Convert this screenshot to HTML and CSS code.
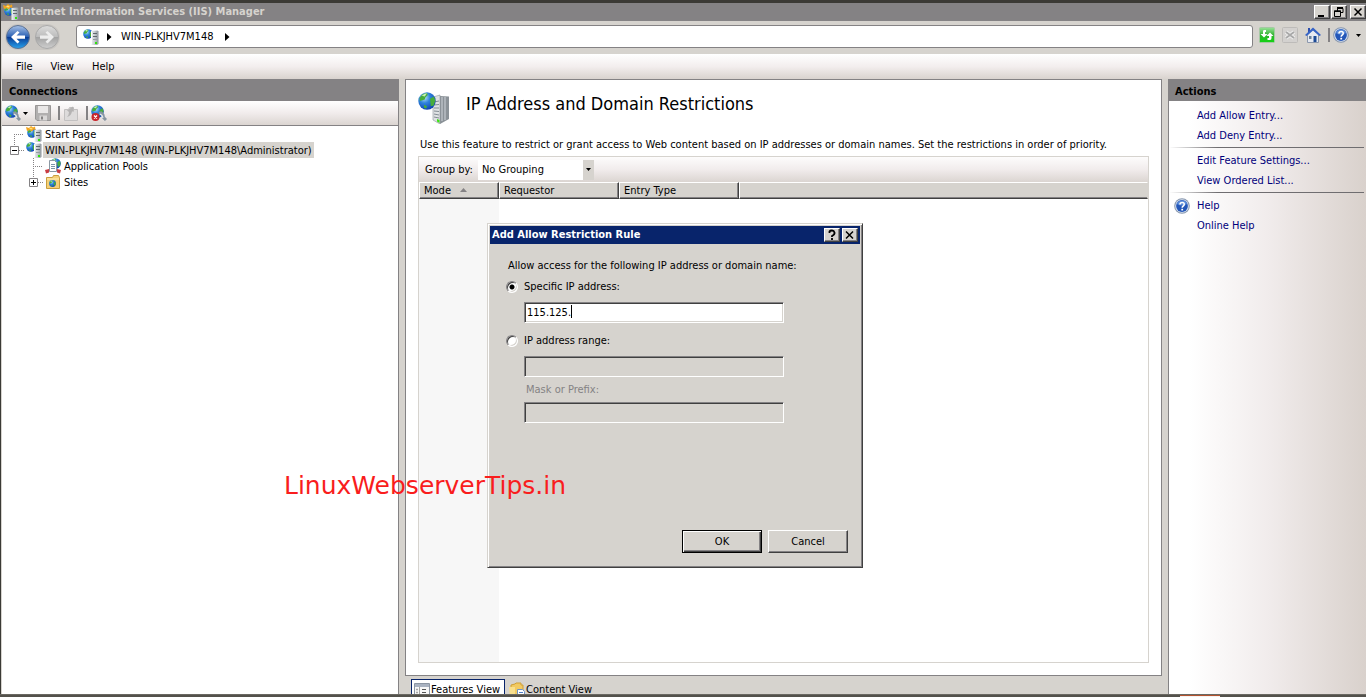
FILE: index.html
```html
<!DOCTYPE html>
<html lang="en">
<head>
<meta charset="utf-8">
<title>Internet Information Services (IIS) Manager</title>
<link rel="stylesheet" href="styles.css">
</head>
<body>
<svg class="defs" aria-hidden="true">
  <defs>
    <radialGradient id="sea" cx=".35" cy=".3" r=".8"><stop offset="0" stop-color="#b9e4fb"/><stop offset=".4" stop-color="#2f84dc"/><stop offset="1" stop-color="#0a3aac"/></radialGradient>
    <linearGradient id="steel" x2="1"><stop offset="0" stop-color="#f2f4f5"/><stop offset=".5" stop-color="#c4cace"/><stop offset="1" stop-color="#8d959b"/></linearGradient>
    <linearGradient id="blueball" x2="0" y2="1"><stop offset="0" stop-color="#a9c2e6"/><stop offset=".48" stop-color="#2c62b4"/><stop offset=".52" stop-color="#0a3d96"/><stop offset="1" stop-color="#27a3ee"/></linearGradient>
    <linearGradient id="greyball" x2="0" y2="1"><stop offset="0" stop-color="#dcdcdc"/><stop offset=".48" stop-color="#bdbdbd"/><stop offset=".52" stop-color="#a3a3a3"/><stop offset="1" stop-color="#cfcfcf"/></linearGradient>
    <linearGradient id="leaf" x2="0" y2="1"><stop offset="0" stop-color="#9be39a"/><stop offset=".5" stop-color="#2fb32f"/><stop offset="1" stop-color="#12d412"/></linearGradient>
  </defs>
  <symbol id="globe" viewBox="0 0 12 12">
    <circle cx="6" cy="6" r="5.800" fill="url(#sea)"/>
    <path d="M1 4 3 1.500 6 .6 6.500 2 5 3.500 4.500 5 3 5.500 1.200 6zM8 4.500 10.500 3 11.600 5.500 10.500 9 8.500 9.500 8.200 6.500zM4 8.500 6 9.500 5.500 11 4 10.500z" fill="#47ad3b"/>
    <path d="M2.500 2.500Q4 1 6 .9L4.500 3z" fill="#c7f0b0"/>
  </symbol>
  <symbol id="server" viewBox="0 0 16 16">
    <use href="#globe" x="0" y="0" width="10" height="10"/>
    <path d="M8 2 14.500 1.500 15.500 2.500V15L14 16H8z" fill="url(#steel)"/>
    <path d="M8.500 2.500V15.500" stroke="#fff"/>
    <path d="M10 4.500H14M10 7.500H14" stroke="#5f686f"/>
    <path d="M10 10.500H14" stroke="#949ca2"/>
    <path d="M12 13h2v2h-2z" fill="#30e40c"/>
  </symbol>
  <symbol id="start" viewBox="0 0 16 16">
    <use href="#globe" x="1" y="2" width="10" height="10"/>
    <path d="M8.500 4 14.500 3.500 15.500 4.500V15L14 16H8.500z" fill="url(#steel)"/>
    <path d="M10 6.500H14M10 9.500H14" stroke="#5f686f"/>
    <path d="M12 13h2v2h-2z" fill="#30e40c"/>
    <path d="M0 1 3 2 5 0 7 1.500 9 .5 9.500 4 7.500 3.500 6 5.500 4 4 1 5z" fill="#f4a31c"/>
    <path d="M3 2.500 5 1.500 7 3 5 3.500z" fill="#ffe27a"/>
  </symbol>
  <symbol id="connect" viewBox="0 0 16 16">
    <use href="#globe" x="0" y="0" width="13" height="13"/>
    <path d="M8 8.500 10 8 12 10 12.500 12.500 15 15" fill="none" stroke="#8795a1" stroke-width="3"/>
    <path d="M9 9 11 10.500 12 13" fill="none" stroke="#e4ebef" stroke-width="1.200"/>
  </symbol>
  <symbol id="help" viewBox="0 0 16 16">
    <circle cx="8" cy="8" r="7.800" fill="#8796ad"/><circle cx="8" cy="8" r="6.800" fill="#d9e4f3"/>
    <circle cx="8" cy="8" r="5.900" fill="#2457b8"/>
    <path d="M3 6A5.300 5.300 0 0 1 13 6Q8 9 3 6z" fill="#5d8edb"/>
    <path d="M6 6.500Q6 4.500 8.200 4.500T10.200 6.500Q10.200 7.500 9 8.200 8.200 8.700 8.200 9.800" fill="none" stroke="#fff" stroke-width="1.600"/>
    <path d="M7.300 10.800h1.800v1.700H7.300z" fill="#fff"/>
  </symbol>
</svg>

<div class="window">
  <header class="titlebar">
    <svg class="icon"><use href="#start"/></svg>
    <h1 class="title">Internet Information Services (IIS) Manager</h1>
    <div class="caption-buttons">
      <button class="cap" aria-label="Minimize"><svg viewBox="0 0 12 12"><path d="M2 9h6v2H2z"/></svg></button>
      <button class="cap" aria-label="Restore"><svg viewBox="0 0 12 12"><path d="M4 2.500h6v4H8M4.500 5V2M10 1.500H4M1.500 5v5.500h6V5z" fill="none" stroke="#000"/><path d="M1 4.500h7v1.500H1z"/></svg></button>
      <button class="cap cap-close" aria-label="Close"><svg viewBox="0 0 12 12"><path d="M2.500 2.500 9.500 9.500M9.500 2.500 2.500 9.500" stroke="#000" stroke-width="1.500"/></svg></button>
    </div>
  </header>

  <nav class="navbar">
    <div class="travel">
      <button class="ball" aria-label="Back"><svg viewBox="0 0 24 24"><circle cx="12" cy="12" r="11.500" fill="url(#blueball)" stroke="#5d7292"/><path d="M5 12 11.500 6 13.500 7.500 10.500 10.500H19V13.800H10.500L13.500 16.800 11.500 18.500z" fill="#fff"/></svg></button>
      <button class="ball" aria-label="Forward"><svg viewBox="0 0 24 24"><circle cx="12" cy="12" r="11.500" fill="url(#greyball)" stroke="#a9a9a9"/><path d="M19 12 12.500 6 10.500 7.500 13.500 10.500H5V13.800H13.500L10.500 16.800 12.500 18.500z" fill="#ededed"/></svg></button>
    </div>
    <div class="address">
      <svg class="icon"><use href="#server"/></svg>
      <svg class="arrow" viewBox="0 0 5 8"><path d="M0 0 4.500 4 0 8z"/></svg>
      <span>WIN-PLKJHV7M148</span>
      <svg class="arrow arrow-last" viewBox="0 0 5 8"><path d="M0 0 4.500 4 0 8z"/></svg>
    </div>
    <div class="nav-tools">
      <button class="tool" aria-label="Refresh"><svg viewBox="0 0 16 16"><rect x=".5" y=".5" width="15" height="15" rx="1" fill="url(#leaf)" stroke="#a6c8a4"/><path d="M7 3H5Q4 3 4 4.500V7H1.500L5 10.500 8.500 7H6V5H7zM8.500 13H11Q12.500 13 12.500 11V9H14.500L11 5.500 7.500 9H10V11H8.500z" fill="#fff"/></svg></button>
      <button class="tool" aria-label="Stop"><svg viewBox="0 0 16 16"><rect x=".5" y=".5" width="15" height="15" rx="1" fill="#d3d1cf" stroke="#bdbbb9"/><path d="M4 5 12 11M12 5 4 11" stroke="#f0f0f0" stroke-width="3.500"/><path d="M4 5 12 11M12 5 4 11" stroke="#a8a8a8" stroke-width="1.800"/></svg></button>
      <button class="tool" aria-label="Home"><svg viewBox="0 0 16 16"><path d="M2.500 8 8 2.500 13.500 8V15.500H2.500z" fill="#e6eaf2" stroke="#8c98ad"/><path d="M3 1h2v5H3z" fill="#2d4fae"/><path d="M0 8 8 .5 16 8 14.500 9 8 3.500 1.500 9z" fill="#3563c7"/><path d="M8.500 9h3v6h-3z" fill="#1d4b96"/><path d="M4 9h2.500v3H4z" fill="#69809c"/></svg></button>
      <span class="bar"></span>
      <button class="tool" aria-label="Help"><svg><use href="#help"/></svg></button>
      <svg class="drop" viewBox="0 0 5 3"><path d="M0 0h5L2.500 3z"/></svg>
    </div>
  </nav>

  <div class="menubar"><button class="menu">File</button><button class="menu">View</button><button class="menu">Help</button></div>

  <div class="body">
    <section class="connections">
      <h2 class="pane-head">Connections</h2>
      <div class="toolbar">
        <button class="tool" aria-label="Connect"><svg><use href="#connect"/></svg></button>
        <svg class="drop" viewBox="0 0 5 3"><path d="M0 0h5L2.500 3z"/></svg>
        <button class="tool save" aria-label="Save"><svg viewBox="0 0 16 16"><path d="M.5.5h15v15H2L.5 14z" fill="#b1afaf" stroke="#989696"/><path d="M3 1h10v7H3z" fill="#e9e7e7"/><path d="M4.500 10.500h7.500v5H4.500z" fill="#d9d7d7"/><path d="M6 11.500h2v3H6z" fill="#858383"/></svg></button>
        <span class="bar"></span>
        <button class="tool" aria-label="Up"><svg viewBox="0 0 16 16"><path d="M1.500 4.500h4l1-2h4v2h4v11h-13z" fill="#dddbdb" stroke="#c2c0c0"/><path d="M4 12Q6 10 6 7L4 5.500 10 1.500 11 6.500 9 6.500Q8 11 4 12z" fill="#b5b3b3"/></svg></button>
        <span class="bar"></span>
        <button class="tool" aria-label="Delete connection"><svg viewBox="0 0 16 16"><use href="#connect" width="16" height="16"/><circle cx="4.500" cy="12" r="4" fill="#c9242a"/><path d="M3 10.500 6 13.500M6 10.500 3 13.500" stroke="#fff" stroke-width="1.300"/></svg></button>
      </div>
      <ul class="tree">
        <li class="node"><svg class="lines" viewBox="0 0 20 16"><path d="M10.500 8V16M10 8.500H20"/></svg><svg class="icon"><use href="#start"/></svg><span class="label">Start Page</span></li>
        <li class="node"><svg class="lines" viewBox="0 0 20 16"><path d="M10.500 0V4M15 8.500H20"/><path class="box" d="M6.500 4.500h8v8h-8z"/><path class="sign" d="M8 8.500h5"/></svg><svg class="icon"><use href="#server"/></svg><span class="label selected">WIN-PLKJHV7M148 (WIN-PLKJHV7M148\Administrator)</span></li>
        <li class="node child"><svg class="lines" viewBox="0 0 20 16"><path d="M10.500 0V16M10 8.500H20"/></svg><svg class="icon" viewBox="0 0 16 16"><use href="#globe" x="5" y="0" width="11" height="11"/><path d="M4.500 2.500h5l2 2v9h-7z" fill="#fff" stroke="#8b98a4"/><path d="M6 6.500h4M6 8.500h4M6 10.500h4" stroke="#7b94a8"/><path d="M0 12 4 11V14.500L1 15.500zM16 12 12 11V14.500L15 15.500z" fill="#c93d43"/></svg><span class="label">Application Pools</span></li>
        <li class="node child"><svg class="lines" viewBox="0 0 20 16"><path d="M10.500 0V4M15 8.500H20"/><path class="box" d="M6.500 4.500h8v8h-8z"/><path class="sign" d="M8 8.500h5M10.500 6v5"/></svg><svg class="icon" viewBox="0 0 16 16"><path d="M1.500 3.500h6l1-2h5l1 2v11h-13z" fill="#f5d077" stroke="#c99e3d"/><path d="M2 5h12" stroke="#fff0b8"/><use href="#globe" x="4" y="6" width="7" height="7"/></svg><span class="label">Sites</span></li>
      </ul>
    </section>

    <main class="center">
      <section class="feature">
        <div class="feature-head">
          <svg class="feature-icon" viewBox="0 0 32 32"><path d="M15 5 22 3V32L15 28z" fill="#dfe2e4" stroke="#8d959b" stroke-width=".6"/><path d="M22 4 31 4.500V27L22 32z" fill="#8b9298"/><path d="M24 5V29M27 5V28" stroke="#b9bfc4" stroke-width="1.500"/><path d="M16 10 21 9M16 13 21 12.500M16 16 21 16M16 19 21 19.500M16 22 21 23M16 25 21 26" stroke="#858d94"/><path d="M19 27l2.500 1v3L19 29.500z" fill="#3ce314"/><use href="#globe" x="0" y="0" width="18" height="18"/></svg>
          <h2 class="feature-title">IP Address and Domain Restrictions</h2>
        </div>
        <p class="description">Use this feature to restrict or grant access to Web content based on IP addresses or domain names. Set the restrictions in order of priority.</p>
        <div class="grid">
          <div class="groupbar">
            <label for="group">Group by:</label>
            <span class="select-wrap"><select id="group" class="group-select"><option>No Grouping</option></select><svg class="drop" viewBox="0 0 5 3"><path d="M0 0h5L2.500 3z"/></svg></span>
          </div>
          <table class="rules">
            <thead><tr><th class="col">Mode <svg class="sort" viewBox="0 0 7 4"><path d="M0 4 3.500 0 7 4z"/></svg></th><th class="col">Requestor</th><th class="col">Entry Type</th><th></th></tr></thead>
          </table>
        </div>
      </section>
      <div class="tabs">
        <button class="tab active"><svg class="icon" viewBox="0 0 16 16"><path d="M.5 1.500h15v14H.5z" fill="#f8f8f8" stroke="#8c96a3"/><path d="M1 2h14v3H1z" fill="#aab3c1"/><path d="M5.500 5v11" stroke="#a6a6a6"/><path d="M2 7.500h2M2 10.500h2M2 13.500h2" stroke="#a5a5a5" stroke-width="1.500"/><path d="M8 7.500h4M8 10.500h4M8 13.500h4" stroke="#555"/></svg>Features View</button>
        <button class="tab"><svg class="icon" viewBox="0 0 16 16"><path d="M2 3 6 2 7 1h5v2h2v11H2z" fill="#f2ca62" stroke="#cf9f37"/><path d="M0 5h6v11H1z" fill="#f9e08e"/><path d="M8.500 7.500h5l2 2v6h-7z" fill="#fff" stroke="#6f93c4"/><path d="M10 10.500h4M10 12.500h4" stroke="#4f7fc9"/></svg>Content View</button>
      </div>
    </main>

    <aside class="actions">
      <h2 class="pane-head">Actions</h2>
      <nav class="links">
        <div class="group"><a class="link" href="#">Add Allow Entry...</a><a class="link" href="#">Add Deny Entry...</a></div>
        <div class="group"><a class="link" href="#">Edit Feature Settings...</a><a class="link" href="#">View Ordered List...</a></div>
        <div class="group"><a class="link with-icon" href="#"><svg class="icon"><use href="#help"/></svg>Help</a><a class="link" href="#">Online Help</a></div>
      </nav>
    </aside>
  </div>
</div>
<div class="taskbar"><span class="task-active"></span></div>

<form class="dialog" role="dialog" aria-labelledby="dialog-title">
  <div class="dialog-bar">
    <h2 class="dialog-title" id="dialog-title">Add Allow Restriction Rule</h2>
    <button type="button" class="cap" aria-label="Help"><svg viewBox="0 0 12 12"><path d="M3.500 4V2.500Q4 1.500 6 1.500T8.500 3.500 6 7V8M6 9v2" fill="none" stroke="#000" stroke-width="1.800"/></svg></button>
    <button type="button" class="cap" aria-label="Close"><svg viewBox="0 0 12 12"><path d="M2 2.500 9 9.500M9 2.500 2 9.500" stroke="#000" stroke-width="1.500"/></svg></button>
  </div>
  <div class="dialog-body">
    <p class="prompt">Allow access for the following IP address or domain name:</p>
    <label class="choice"><input class="radio" type="radio" name="kind" checked>Specific IP address:</label>
    <div class="field specific"><input class="text" id="ip" aria-label="Specific IP address" value="115.125."><span class="caret"></span></div>
    <label class="choice"><input class="radio" type="radio" name="kind">IP address range:</label>
    <div class="field"><input class="text" aria-label="IP address range" disabled></div>
    <label class="mask-label" for="mask">Mask or Prefix:</label>
    <div class="field"><input class="text" id="mask" disabled></div>
    <div class="dialog-buttons"><button type="button" class="push default">OK</button><button type="button" class="push">Cancel</button></div>
  </div>
</form>
<div class="watermark">LinuxWebserverTips.in</div>
</body>
</html>
```
FILE: styles.css
```css
* { box-sizing: border-box; }
body {
  margin: 0;
  height: 100vh;
  display: flex;
  flex-direction: column;
  overflow: hidden;
  background: #3b3a35;
  color: #000;
  font: 11px/16px "DejaVu Sans Condensed", Tahoma, "DejaVu Sans", sans-serif;
}
button, input, select { font: inherit; color: inherit; }
button { margin: 0; padding: 0; border: 0; background: none; }
h1, h2, p, ul { margin: 0; padding: 0; font-size: inherit; }
svg { display: block; flex: none; }
.defs { position: absolute; width: 0; height: 0; }
.icon { width: 16px; height: 16px; }
.drop { width: 5px; height: 3px; }
.bar { width: 2px; height: 14px; background: #848284; }

.window {
  flex: 1;
  min-height: 0;
  margin: 3px 0 0 1px;
  display: flex;
  flex-direction: column;
  border-left: 1px solid #d6d3ce;
  background: #d6d3ce;
}
.titlebar {
  height: 18px;
  margin-left: -1px;
  padding-left: 2px;
  display: flex;
  align-items: center;
  gap: 1px;
  background: #848284;
  color: #d6d3ce;
}
.title { flex: 1; font-weight: bold; line-height: 18px; }
.caption-buttons { display: flex; gap: 1px; }
.cap {
  width: 16px;
  height: 14px;
  display: flex;
  align-items: center;
  justify-content: center;
  background: #d6d3ce;
  border: 1px solid;
  border-color: #fff #404040 #404040 #fff;
  box-shadow: inset -1px -1px #848284;
}
.cap svg { width: 12px; height: 12px; }
.cap-close { margin-left: 2px; }

.navbar {
  height: 33px;
  padding: 0 5px 2px 3px;
  display: flex;
  align-items: center;
}
.travel {
  padding: 1px;
  margin-right: 16px;
  display: flex;
  gap: 5px;
  border-radius: 14px;
  background: #c9c6c2;
}
.ball, .ball svg { width: 24px; height: 24px; }
.address {
  flex: 1;
  height: 23px;
  padding: 0 6px;
  display: flex;
  align-items: center;
  gap: 8px;
  border: 1px solid #848284;
  border-radius: 3px;
  background: #fff;
}
.arrow { width: 5px; height: 8px; }
.arrow + span { margin-left: 1px; }
.arrow-last { margin-left: 3px; }
.nav-tools { margin: 0 0 3px 6px; display: flex; align-items: center; gap: 7px; }
.tool, .tool svg { width: 16px; height: 16px; }
.nav-tools .bar { margin-right: -4px; }

.menubar {
  height: 25px;
  padding: 0 14px;
  display: flex;
  align-items: center;
  gap: 18px;
  background: linear-gradient(#fff, #f3eeee 50%, #d9d3ce);
}

.body { flex: 1; min-height: 0; display: flex; }
.pane-head {
  height: 22px;
  padding-left: 7px;
  background: #848284;
  font-weight: bold;
  line-height: 25px;
}
.connections {
  flex: 0 1 397px;
  border: 1px solid #848284;
  border-width: 0 1px 0 0;
  background: #fff;
}
.toolbar {
  height: 25px;
  padding-left: 3px;
  display: flex;
  align-items: center;
  gap: 2px;
  border-bottom: 1px solid #848284;
  background: linear-gradient(#fff, #f1ecec 50%, #dbd5d1);
}
.toolbar .bar { margin: 0 1px 0 5px; }
.toolbar .save { margin-left: 5px; }
.tree { list-style: none; padding-left: 2px; }
.node { height: 16px; display: flex; align-items: center; }
.child { padding-left: 19px; }
.node .icon { margin-left: 2px; }
.lines { width: 20px; height: 16px; fill: none; stroke: #848284; stroke-dasharray: 1 1; }
.lines .box { stroke-dasharray: none; }
.lines .sign { stroke: #000; stroke-dasharray: none; }
.label { height: 16px; padding: 0 2px; margin-left: 1px; line-height: 18px; white-space: nowrap; }
.selected { background: #d6d3ce; }

.center { flex: 1; min-width: 0; margin: 0 6px; display: flex; flex-direction: column; }
.feature {
  flex: 1;
  min-height: 0;
  padding: 12px 12px;
  display: flex;
  flex-direction: column;
  border: 1px solid #848284;
  background: #fff;
}
.feature-head { display: flex; gap: 16px; }
.feature-icon { width: 32px; height: 32px; }
.feature-title { font-size: 18px; font-weight: normal; line-height: 24px; }
.description { margin: 12px 0 2px 2px; line-height: 18px; white-space: nowrap; }
.grid {
  flex: 1;
  display: flex;
  flex-direction: column;
  border: 1px solid #d6d3ce;
  background: linear-gradient(90deg, #f7f7f7 80px, #fff 80px);
}
.groupbar {
  height: 25px;
  padding-left: 6px;
  display: flex;
  align-items: center;
  gap: 5px;
  background: linear-gradient(#fdfcfc, #f1ecec 50%, #dbd5d1);
}
.select-wrap {
  width: 116px;
  height: 20px;
  display: flex;
  align-items: center;
  background: linear-gradient(90deg, #fff 105px, #d6d3ce 105px);
}
.group-select {
  width: 100%;
  height: 20px;
  padding: 1px 4px 0;
  margin-right: -8px;
  border: 0;
  background: none;
  appearance: none;
}
.rules { width: 100%; table-layout: fixed; border-collapse: separate; border-spacing: 0; }
.rules th {
  height: 17px;
  padding: 1px 4px 0;
  background: #d6d3ce;
  border: 1px solid;
  border-color: #fff #d6d3ce #404040 #fff;
  box-shadow: inset 0 -1px #848284;
  font-weight: normal;
  line-height: 14px;
  text-align: left;
}
.rules .col { width: 120px; border-right-color: #404040; box-shadow: inset -1px -1px #848284; }
.rules .col:first-child { width: 80px; }
.sort { display: inline-block; width: 7px; height: 4px; margin-left: 6px; vertical-align: 2px; fill: #848284; }

.tabs { height: 18px; padding: 3px 0 0 6px; display: flex; overflow: hidden; }
.tab { height: 20px; padding: 2px 4px 1px; display: flex; align-items: center; gap: 1px; line-height: 18px; }
.active { padding-left: 2px; border: 1px solid #08246b; background: #fff; }

.actions { flex: 0 0 198px; border-left: 1px solid #848284; background: linear-gradient(90deg, #fff 10%, #f1ecec 50%, #d9d1cc); }
.actions .pane-head { padding-left: 6px; }
.links { padding-top: 5px; }
.group { margin-right: 2px; }
.group + .group {
  margin-top: 1px;
  padding-top: 4px;
  background: linear-gradient(90deg, transparent, #6f6d70 25%) top / 100% 1px no-repeat;
}
.link {
  height: 20px;
  padding-left: 28px;
  display: flex;
  align-items: center;
  color: #00007b;
  line-height: 22px;
  text-decoration: none;
}
.with-icon { padding-left: 5px; gap: 7px; }
.taskbar { height: 3px; background: #53514b; border-top: 1px solid #6a6862; display: flex; }
.task-active { width: 40px; margin-left: 1180px; background: #f4f2f0; border-top: 1px solid #b3532f; }

.dialog {
  position: absolute;
  left: 487px;
  top: 223px;
  width: 376px;
  height: 345px;
  padding: 1px;
  display: flex;
  flex-direction: column;
  background: #d6d3ce;
  border: 1px solid;
  border-color: #d6d3ce #404040 #404040 #d6d3ce;
  box-shadow: inset 1px 1px #fff, inset -1px -1px #848284;
}
.dialog-bar {
  height: 18px;
  margin: 1px;
  padding: 0 2px;
  display: flex;
  align-items: center;
  gap: 2px;
  background: #08246b;
  color: #fff;
}
.dialog-title { flex: 1; line-height: 18px; }
.dialog-body { flex: 1; padding: 13px 13px 13px 17px; display: flex; flex-direction: column; align-items: flex-start; }
.prompt { margin: 0 0 5px 2px; }
.choice { height: 16px; display: flex; align-items: center; gap: 6px; }
.radio {
  appearance: none;
  width: 12px;
  height: 12px;
  margin: 0;
  border: 1px solid;
  border-color: #848284 #fff #fff #848284;
  border-radius: 50%;
  background: #fff;
  box-shadow: inset 1px 1px #404040, inset -1px -1px #d6d3ce;
}
.radio:checked { background: radial-gradient(circle at 5px 5px, #000 2px, #fff 3px); }
.field { position: relative; margin: 7px 0 5px 18px; }
.specific { margin-bottom: 10px; }
.text {
  display: block;
  width: 260px;
  height: 21px;
  padding: 0 2px;
  border: 1px solid;
  border-color: #848284 #fff #fff #848284;
  border-radius: 0;
  box-shadow: inset 1px 1px #404040, inset -1px -1px #d6d3ce;
  background: #fff;
}
.text:disabled { background: #d6d3ce; }
.caret { position: absolute; left: 47px; top: 3px; width: 1px; height: 13px; background: #000; }
.mask-label { margin-left: 20px; color: #848284; }
.mask-label + .field { margin-top: 4px; }
.dialog-buttons { margin-top: auto; align-self: flex-end; display: flex; gap: 6px; }
.push {
  width: 80px;
  height: 23px;
  background: #d6d3ce;
  border: 1px solid;
  border-color: #fff #404040 #404040 #fff;
  box-shadow: inset -1px -1px #848284;
}
.default { border-color: #000; box-shadow: inset 1px 1px #fff, inset -1px -1px #404040, inset -2px -2px #848284; }
.watermark {
  position: absolute;
  left: 284px;
  top: 471px;
  color: #f91d1d;
  font: 25px/30px "DejaVu Sans", sans-serif;
}
```
